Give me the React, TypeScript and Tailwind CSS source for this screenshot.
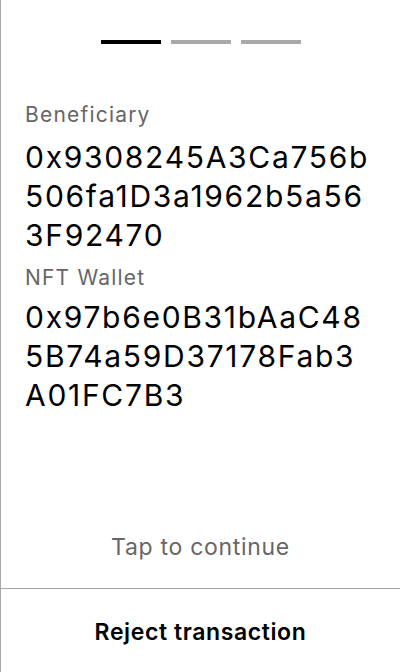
export default function App() {
  const font = { fontFamily: 'Inter, "Noto Sans", sans-serif' };
  return (
    <div
      className="w-[400px] h-[672px] bg-white border-l border-[#a8a8a8] flex flex-col overflow-hidden"
      style={font}
    >
      <div className="flex justify-center gap-[10px] pt-10">
        <div className="w-[60px] h-1 bg-black" />
        <div className="w-[60px] h-1 bg-[#a9a9a9]" />
        <div className="w-[60px] h-1 bg-[#a9a9a9]" />
      </div>
      <div className="pl-6 pr-[25px] pt-[57px] flex flex-col">
        <div className="text-[21px] leading-[28px] tracking-[1.2px] text-[#666666] mb-[9px]">Beneficiary</div>
        <div className="text-[30px] leading-[39px] tracking-[1.7px] text-black break-all">
          0x9308245A3Ca756b506fa1D3a1962b5a563F92470
        </div>
        <div className="text-[21px] leading-[28px] tracking-[1.2px] text-[#666666] mt-[9px] mb-[6px]">NFT Wallet</div>
        <div className="text-[30px] leading-[39px] tracking-[1.7px] text-black break-all">
          0x97b6e0B31bAaC485B74a59D37178Fab3A01FC7B3
        </div>
      </div>
      <div className="flex-1" />
      <div className="text-center text-[23px] leading-[28px] tracking-[0.7px] text-[#666666] pb-[27px]">
        Tap to continue
      </div>
      <div className="border-t border-[#a8a8a8] h-[84px] pt-[2px] flex items-center justify-center">
        <span className="text-[23px] leading-[28px] tracking-[0.6px] font-semibold text-black">
          Reject transaction
        </span>
      </div>
    </div>
  );
}
